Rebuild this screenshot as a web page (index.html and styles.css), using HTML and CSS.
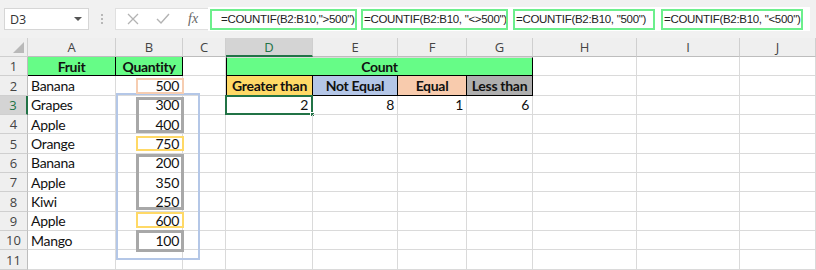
FILE: index.html
```html
<!DOCTYPE html>
<html lang="en">
<head>
<meta charset="UTF-8" />
<title>COUNTIF comparisons</title>
<link rel="stylesheet" href="styles.css">
</head>
<body>
  <div class="topbar">
    <div class="namebox"><span>D3</span><span class="caret"></span></div>
    <div class="dots"><i></i><i></i><i></i></div>
    <div class="fxbox">
      <svg class="icon" width="14" height="14" viewBox="0 0 14 14"><path d="M2 2 L12 12 M12 2 L2 12" stroke="#b3b3b3" stroke-width="1.3" fill="none"/></svg>
      <svg class="icon" width="16" height="14" viewBox="0 0 16 14"><path d="M2 7 L6 11 L14 2" stroke="#b3b3b3" stroke-width="1.4" fill="none"/></svg>
      <span class="fx">fx</span>
    </div>
    <div class="formulabar">
      <div class="formula f1">=COUNTIF(B2:B10,"&gt;500")</div>
      <div class="formula f2">=COUNTIF(B2:B10, "&lt;&gt;500")</div>
      <div class="formula f3">=COUNTIF(B2:B10, "500")</div>
      <div class="formula f4">=COUNTIF(B2:B10, "&lt;500")</div>
    </div>
  </div>

  <div class="sheet">
    <div class="grid">
      <div class="corner"><span class="tri"></span></div>
      <div class="colhead">A</div>
      <div class="colhead">B</div>
      <div class="colhead">C</div>
      <div class="colhead active">D</div>
      <div class="colhead">E</div>
      <div class="colhead">F</div>
      <div class="colhead">G</div>
      <div class="colhead">H</div>
      <div class="colhead">I</div>
      <div class="colhead">J</div>

      <div class="rowhead">1</div>
      <div class="cell head-a">Fruit</div>
      <div class="cell head-b">Quantity</div>
      <div class="cell"></div>
      <div class="cell count">Count</div>
      <div class="cell"></div>
      <div class="cell"></div>
      <div class="cell"></div>

      <div class="rowhead">2</div>
      <div class="cell">Banana</div>
      <div class="cell num">500</div>
      <div class="cell"></div>
      <div class="cell label gt">Greater than</div>
      <div class="cell label ne">Not Equal</div>
      <div class="cell label eq">Equal</div>
      <div class="cell label lt">Less than</div>
      <div class="cell"></div>
      <div class="cell"></div>
      <div class="cell"></div>

      <div class="rowhead active">3</div>
      <div class="cell">Grapes</div>
      <div class="cell num">300</div>
      <div class="cell"></div>
      <div class="cell num selected">2<span class="handle"></span></div>
      <div class="cell num">8</div>
      <div class="cell num">1</div>
      <div class="cell num">6</div>
      <div class="cell"></div>
      <div class="cell"></div>
      <div class="cell"></div>

      <div class="rowhead">4</div>
      <div class="cell">Apple</div>
      <div class="cell num">400</div>
      <div class="cell"></div><div class="cell"></div><div class="cell"></div><div class="cell"></div><div class="cell"></div><div class="cell"></div><div class="cell"></div><div class="cell"></div>

      <div class="rowhead">5</div>
      <div class="cell">Orange</div>
      <div class="cell num">750</div>
      <div class="cell"></div><div class="cell"></div><div class="cell"></div><div class="cell"></div><div class="cell"></div><div class="cell"></div><div class="cell"></div><div class="cell"></div>

      <div class="rowhead">6</div>
      <div class="cell">Banana</div>
      <div class="cell num">200</div>
      <div class="cell"></div><div class="cell"></div><div class="cell"></div><div class="cell"></div><div class="cell"></div><div class="cell"></div><div class="cell"></div><div class="cell"></div>

      <div class="rowhead">7</div>
      <div class="cell">Apple</div>
      <div class="cell num">350</div>
      <div class="cell"></div><div class="cell"></div><div class="cell"></div><div class="cell"></div><div class="cell"></div><div class="cell"></div><div class="cell"></div><div class="cell"></div>

      <div class="rowhead">8</div>
      <div class="cell">Kiwi</div>
      <div class="cell num">250</div>
      <div class="cell"></div><div class="cell"></div><div class="cell"></div><div class="cell"></div><div class="cell"></div><div class="cell"></div><div class="cell"></div><div class="cell"></div>

      <div class="rowhead">9</div>
      <div class="cell">Apple</div>
      <div class="cell num">600</div>
      <div class="cell"></div><div class="cell"></div><div class="cell"></div><div class="cell"></div><div class="cell"></div><div class="cell"></div><div class="cell"></div><div class="cell"></div>

      <div class="rowhead">10</div>
      <div class="cell">Mango</div>
      <div class="cell num">100</div>
      <div class="cell"></div><div class="cell"></div><div class="cell"></div><div class="cell"></div><div class="cell"></div><div class="cell"></div><div class="cell"></div><div class="cell"></div>

      <div class="rowhead">11</div>
      <div class="cell"></div><div class="cell"></div><div class="cell"></div><div class="cell"></div><div class="cell"></div><div class="cell"></div><div class="cell"></div><div class="cell"></div><div class="cell"></div><div class="cell"></div>
    </div>

    <!-- range highlights drawn over column B -->
    <div class="mark blue"></div>
    <div class="mark peach m2"></div>
    <div class="mark gray m34"></div>
    <div class="mark yellow m5"></div>
    <div class="mark gray m68"></div>
    <div class="mark yellow m9"></div>
    <div class="mark gray m10"></div>
  </div>
</body>
</html>
```

FILE: styles.css
```css
:root {
  --grid: #dadada;
  --green-fill: #66fc87;
  --green-line: #6cef8c;
  --excel-green: #217346;
  --head-bg: #efefef;
  --head-line: #cfcfcf;
}

* {
  box-sizing: border-box;
}

body {
  margin: 0;
  width: 816px;
  height: 270px;
  overflow: hidden;
  background: #fff;
  font-family: Lato, "Open Sans", sans-serif;
  color: #111;
}

/* formula bar */
.topbar {
  height: 38px;
  background: #f1f1f1;
  display: flex;
  align-items: center;
  padding-left: 4px;
}

.namebox {
  width: 85px;
  height: 22px;
  background: #fff;
  border: 1px solid #d6d6d6;
  display: flex;
  align-items: center;
  justify-content: space-between;
  padding: 0 6px 0 5px;
  font-family: "Open Sans", sans-serif;
  font-size: 12.5px;
  color: #333;
}

.caret {
  width: 0;
  height: 0;
  border-left: 4px solid transparent;
  border-right: 4px solid transparent;
  border-top: 4px solid #555;
}

.dots {
  width: 26px;
  display: flex;
  flex-direction: column;
  align-items: center;
  gap: 2px;
}

.dots i {
  width: 2px;
  height: 2px;
  background: #b8b8b8;
}

.fxbox {
  width: 93px;
  height: 22px;
  background: #fff;
  border: 1px solid #e0e0e0;
  border-right: none;
  display: flex;
  align-items: center;
  gap: 15px;
  padding-left: 10px;
}

.fx {
  font-family: "Liberation Serif", serif;
  font-style: italic;
  font-size: 14px;
  color: #666;
  margin-left: 2px;
}

.formulabar {
  flex: 1;
  height: 24px;
  background: #fff;
  display: flex;
  align-items: center;
  gap: 4px;
  padding-left: 2px;
  margin-right: 6px;
}

.formula {
  height: 21px;
  border: 2px solid var(--green-line);
  display: flex;
  align-items: center;
  font-family: "Liberation Sans", Arial, sans-serif;
  font-size: 11.5px;
  letter-spacing: -0.3px;
  color: #222;
  white-space: nowrap;
  overflow: hidden;
}

.f1 { width: 147px; padding-left: 9px; }
.f2 { width: 147px; padding-left: 1px; }
.f3 { width: 142px; padding-left: 1px; margin-left: 1px; }
.f4 { width: 142px; padding-left: 1px; margin-left: 2px; }

/* sheet */
.sheet {
  position: relative;
}

.grid {
  display: grid;
  grid-template-columns: 28px 88px 67px 43px 87px 85px 69px 66px 104px 103px 76px;
  grid-template-rows: 19px repeat(11, 19.35px);
  font-size: 14px;
  letter-spacing: -0.3px;
}

.corner {
  background: var(--head-bg);
  border-right: 1px solid var(--head-line);
  border-bottom: 1px solid var(--head-line);
  position: relative;
}

.tri {
  position: absolute;
  right: 3px;
  bottom: 3px;
  width: 0;
  height: 0;
  border-left: 11px solid transparent;
  border-bottom: 11px solid #b9b9b9;
}

.colhead {
  background: var(--head-bg);
  border-right: 1px solid var(--head-line);
  border-bottom: 1px solid #bdbdbd;
  font-family: "Open Sans", sans-serif;
  font-size: 13px;
  letter-spacing: 0;
  color: #444;
  display: flex;
  align-items: center;
  justify-content: center;
}

.colhead.active {
  background: #d4d4d4;
  color: var(--excel-green);
  border-bottom: 2px solid var(--excel-green);
}

.rowhead {
  background: var(--head-bg);
  border-right: 1px solid #bdbdbd;
  border-bottom: 1px solid var(--head-line);
  font-family: "Open Sans", sans-serif;
  font-size: 13px;
  letter-spacing: 0;
  color: #444;
  display: flex;
  align-items: center;
  justify-content: center;
}

.rowhead.active {
  background: #d4d4d4;
  color: var(--excel-green);
  border-right: 2px solid var(--excel-green);
}

.cell {
  border-right: 1px solid var(--grid);
  border-bottom: 1px solid var(--grid);
  padding: 0 3px;
  display: flex;
  align-items: center;
  white-space: nowrap;
  position: relative;
}

.num {
  justify-content: flex-end;
}

.head-a,
.head-b {
  background: var(--green-fill);
  font-weight: bold;
  justify-content: center;
  border-right: 1px solid #000;
  border-bottom: 1px solid #000;
}

.count {
  grid-column: span 4;
  background: var(--green-fill);
  font-weight: bold;
  justify-content: center;
  border: 1px solid #000;
  border-top-color: var(--grid);
}

.label {
  font-weight: bold;
  justify-content: center;
  border-right: 1px solid #000;
  border-bottom: 1px solid #000;
}

.gt { background: #ffd966; border-left: 1px solid #000; }
.ne { background: #b4c6e7; }
.eq { background: #f8cbad; }
.lt { background: #aeaeae; }

.selected {
  border: 2px solid var(--excel-green);
  margin: -1px 0 0 -1px;
}

.handle {
  position: absolute;
  right: -4px;
  bottom: -4px;
  width: 5px;
  height: 5px;
  background: var(--excel-green);
  border: 1px solid #fff;
}

/* highlight frames over column B */
.mark {
  position: absolute;
  left: 136px;
  width: 48px;
  pointer-events: none;
}

.blue {
  left: 116px;
  top: 55px;
  width: 84px;
  height: 167px;
  border: 2px solid #b4c7e7;
}

.peach { border: 2px solid #f6cdb1; }
.gray { border: 3px solid #a8a8a8; }
.yellow { border: 2px solid #ffd966; }

.m2 { top: 40px; height: 16px; }
.m34 { top: 59px; height: 36px; }
.m5 { top: 98px; height: 15px; }
.m68 { top: 116px; height: 56px; }
.m9 { top: 174px; height: 16px; }
.m10 { top: 192px; height: 22px; }
```
